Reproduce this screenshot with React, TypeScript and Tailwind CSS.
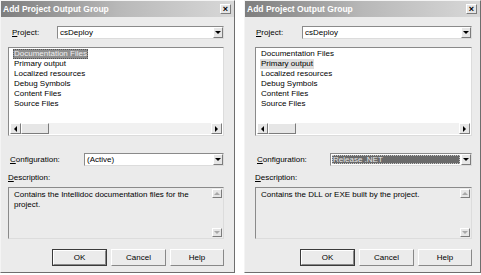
import React from 'react';

const font = { fontFamily: '"Liberation Sans", Arial, sans-serif' };

const items = ['Documentation Files', 'Primary output', 'Localized resources', 'Debug Symbols', 'Content Files', 'Source Files'];

const Tri: React.FC<{ dir: 'down' | 'up' | 'left' | 'right'; color?: string }> = ({ dir, color = '#000' }) => {
    const pts = {
        down: '0,0 6,0 3,3',
        up: '0,3 6,3 3,0',
        left: '3,0 3,6 0,3',
        right: '0,0 0,6 3,3',
    }[dir];
    const vertical = dir === 'down' || dir === 'up';
    return (
        <svg width={vertical ? 6 : 3} height={vertical ? 3 : 6} viewBox={vertical ? '0 0 6 3' : '0 0 3 6'}>
            <polygon points={pts} fill={color} />
        </svg>
    );
};

const RaisedBox: React.FC<{ className?: string; children?: React.ReactNode }> = ({ className = '', children }) => (
    <div className={`flex items-center justify-center bg-[#e6e6e6] border border-t-white border-l-white border-r-[#7c7c7c] border-b-[#7c7c7c] ${className}`}>
        {children}
    </div>
);

const Combo: React.FC<{ text: string; highlight?: boolean; className?: string }> = ({ text, highlight, className = '' }) => (
    <div className={`flex h-[13px] bg-white border border-t-[#8a8a8a] border-l-[#8a8a8a] border-r-[#dcdcdc] border-b-[#dcdcdc] ${className}`}>
        <div className="flex-1 flex items-center p-[1px]">
            {highlight ? (
                <span className="flex-1 h-full flex items-center pl-[1px] bg-[#6a6a6a] text-[#e8e8e8] outline outline-1 outline-dotted outline-[#c8c8c8] -outline-offset-1">{text}</span>
            ) : (
                <span className="pl-[1px]">{text}</span>
            )}
        </div>
        <RaisedBox className="w-[10px]">
            <Tri dir="down" />
        </RaisedBox>
    </div>
);

const Btn: React.FC<{ label: string; primary?: boolean; className?: string }> = ({ label, primary, className = '' }) => (
    <div className={`h-[17px] flex items-center justify-center ${primary ? 'border border-[#3a3a3a]' : ''} ${className}`}>
        <div className="w-full h-full flex items-center justify-center bg-[#ebebeb] border border-t-white border-l-white border-r-[#888] border-b-[#888]">{label}</div>
    </div>
);

interface DialogProps {
    selected: number;
    focused: boolean;
    config: string;
    configHighlight?: boolean;
    description: React.ReactNode;
}

const Dialog: React.FC<DialogProps> = ({ selected, focused, config, configHighlight, description }) => (
    <div className="h-[273px] flex flex-col bg-[#ebebeb] border border-t-[#f4f4f4] border-l-[#f4f4f4] border-r-[#6e6e6e] border-b-[#6e6e6e] text-[8px] text-black" style={font}>
        <div className="h-[16px] flex items-center justify-between pl-[2px] pr-[3px] bg-gradient-to-r from-[#7e7e7e] via-[#b8b8b8] to-[#d8d8d8]">
            <span className="text-white font-bold text-[8.5px]">Add Project Output Group</span>
            <RaisedBox className="w-[11px] h-[10px] text-[9px] font-bold leading-none">×</RaisedBox>
        </div>

        <div className="flex-1 flex flex-col pl-[var(--pl)] pr-[var(--pr)]">
            <div className="mt-[9px] flex items-center h-[13px]">
                <span className="w-[var(--pw)] pl-[var(--plab)]"><u>P</u>roject:</span>
                <Combo text="csDeploy" className="flex-1" />
            </div>

            <div className="mt-[8px] h-[89px] flex flex-col bg-white border border-t-[#8a8a8a] border-l-[#8a8a8a] border-r-[#dcdcdc] border-b-[#dcdcdc]">
                <div className="flex-1 flex flex-col pt-[1px] pl-[4px]">
                    {items.map((it, i) => (
                        <div key={it} className="h-[10px] flex items-center">
                            {i === selected ? (
                                <span className={`px-[1px] h-full flex items-center ${focused ? 'bg-[#8e8e8e] text-[#f0f0f0] outline outline-1 outline-dotted outline-[#555] -outline-offset-1' : 'bg-[#dedede]'}`}>{it}</span>
                            ) : (
                                <span className="px-[1px]">{it}</span>
                            )}
                        </div>
                    ))}
                </div>
                <div className="h-[11px] flex bg-[#f1f1f1] mx-[1px] mb-[1px]">
                    <RaisedBox className="w-[11px]"><Tri dir="left" /></RaisedBox>
                    <RaisedBox className="w-[28px]" />
                    <div className="flex-1" />
                    <RaisedBox className="w-[11px]"><Tri dir="right" /></RaisedBox>
                </div>
            </div>

            <div className="mt-[17px] flex items-center h-[13px]">
                <span className="w-[var(--cw)] pl-[2px]"><u>C</u>onfiguration:</span>
                <Combo text={config} highlight={configHighlight} className="flex-1" />
            </div>

            <div className="mt-[6px] h-[12px] flex items-center">
                <span><u>D</u>escription:</span>
            </div>

            <div className="mt-[3px] h-[52px] flex bg-[#ebebeb] border border-t-[#8a8a8a] border-l-[#8a8a8a] border-r-[#dcdcdc] border-b-[#dcdcdc]">
                <div className="flex-1 pl-[5px] pt-[2px] leading-[10px]">{description}</div>
                <div className="w-[10px] flex flex-col justify-between my-[1px] mr-[1px]">
                    <RaisedBox className="h-[9px]"><Tri dir="up" color="#a8a8a8" /></RaisedBox>
                    <RaisedBox className="h-[9px]"><Tri dir="down" color="#a8a8a8" /></RaisedBox>
                </div>
            </div>

            <div className="mt-[10px] flex justify-end gap-[4px]">
                <Btn label="OK" primary className="w-[55px]" />
                <Btn label="Cancel" className="w-[55px]" />
                <Btn label="Help" className="w-[54px]" />
            </div>
        </div>
    </div>
);

export default function App() {
    return (
        <div className="w-[481px] h-[275px] bg-white flex items-start">
            <div className="w-[235px]" style={{ ['--pl' as string]: '7px', ['--pr' as string]: '10px', ['--pw' as string]: '49px', ['--plab' as string]: '4px', ['--cw' as string]: '76px' } as React.CSSProperties}>
                <Dialog
                    selected={0}
                    focused
                    config="(Active)"
                    description={<>Contains the Intellidoc documentation files for the<br />project.</>}
                />
            </div>
            <div className="w-[237px] ml-[9px]" style={{ ['--pl' as string]: '10px', ['--pr' as string]: '8px', ['--pw' as string]: '47px', ['--plab' as string]: '1px', ['--cw' as string]: '75px' } as React.CSSProperties}>
                <Dialog
                    selected={1}
                    focused={false}
                    config="Release .NET"
                    configHighlight
                    description="Contains the DLL or EXE built by the project."
                />
            </div>
        </div>
    );
}
